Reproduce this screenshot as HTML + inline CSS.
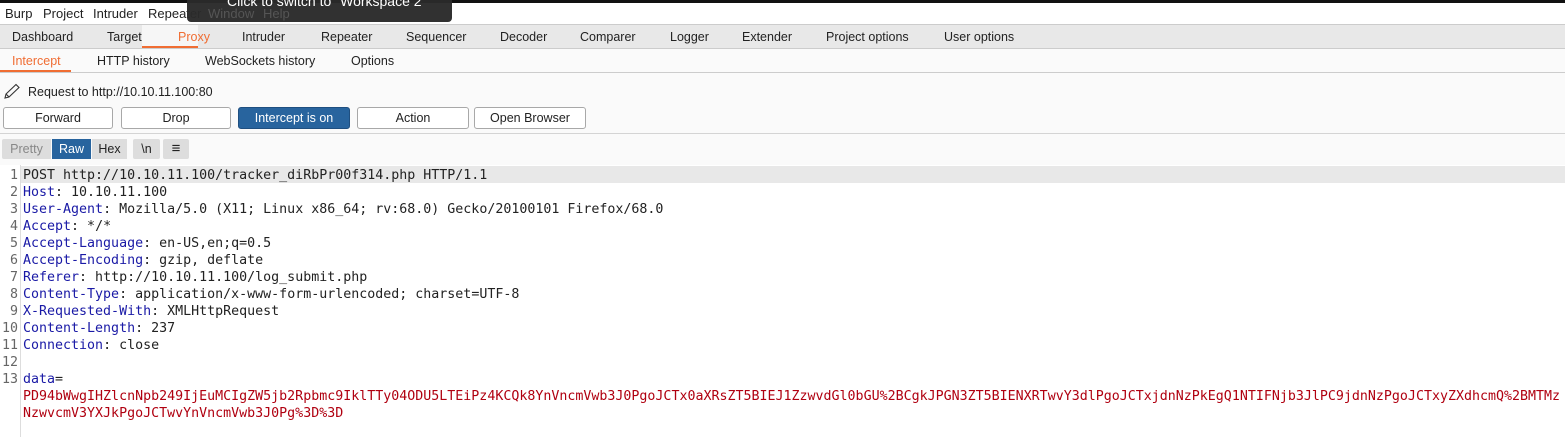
<!DOCTYPE html>
<html><head><style>
*{margin:0;padding:0;box-sizing:border-box}
body{width:1565px;height:437px;background:#fafafa;position:relative;overflow:hidden;font-family:"Liberation Sans",sans-serif;font-size:12.5px;color:#222}
.a{position:absolute;white-space:nowrap}
.btn{position:absolute;top:107px;height:22px;border:1px solid #a8a8a8;border-radius:3px;background:#fff;text-align:center;line-height:20px;font-size:12.5px}
.ed{position:absolute;left:0;top:167px;font-family:"DejaVu Sans Mono","Liberation Mono",monospace;font-size:13.3px;line-height:17px}
.ln{position:absolute;left:0;width:18px;text-align:right;color:#666}
.tx{position:absolute;left:23px;white-space:pre}
.k{color:#1a1aa6}
.r{color:#b00010}
</style></head><body>
<div class="a" style="left:0;top:0;width:1565px;height:3px;background:#111"></div>
<div class="a" style="left:0;top:3px;width:1565px;height:21px;background:#fff"></div>
<div class="a" style="left:5px;top:6px;font-size:13px">Burp</div>
<div class="a" style="left:43px;top:6px;font-size:13px">Project</div>
<div class="a" style="left:93px;top:6px;font-size:13px">Intruder</div>
<div class="a" style="left:148px;top:6px;font-size:13px">Repeater</div>
<div class="a" style="left:187px;top:0;width:265px;height:22px;background:#2a2a2a;border-radius:0 0 4px 4px;opacity:.97"></div>
<div class="a" style="left:208px;top:6px;color:#555;font-size:13px">Window</div>
<div class="a" style="left:263px;top:6px;color:#555;font-size:13px">Help</div>
<div class="a" style="left:227px;top:-7px;color:#fff;font-size:14px">Click to switch to "Workspace 2"</div>
<div class="a" style="left:0;top:24px;width:1565px;height:25px;background:#e8e8e8;border-top:1px solid #ccc;border-bottom:1px solid #ccc"></div>
<div class="a" style="left:142px;top:25px;width:56px;height:23px;background:#f6f6f6;border-bottom:2px solid #f06d33"></div>
<div class="a" style="left:12px;top:30px">Dashboard</div>
<div class="a" style="left:107px;top:30px">Target</div>
<div class="a" style="left:178px;top:30px;color:#f06d33">Proxy</div>
<div class="a" style="left:242px;top:30px">Intruder</div>
<div class="a" style="left:321px;top:30px">Repeater</div>
<div class="a" style="left:406px;top:30px">Sequencer</div>
<div class="a" style="left:500px;top:30px">Decoder</div>
<div class="a" style="left:580px;top:30px">Comparer</div>
<div class="a" style="left:670px;top:30px">Logger</div>
<div class="a" style="left:742px;top:30px">Extender</div>
<div class="a" style="left:826px;top:30px">Project options</div>
<div class="a" style="left:944px;top:30px">User options</div>
<div class="a" style="left:0;top:72px;width:1565px;height:1px;background:#ccc"></div>
<div class="a" style="left:0;top:70px;width:71px;height:2px;background:#f06d33"></div>
<div class="a" style="left:12px;top:54px;color:#f06d33">Intercept</div>
<div class="a" style="left:97px;top:54px">HTTP history</div>
<div class="a" style="left:205px;top:54px">WebSockets history</div>
<div class="a" style="left:351px;top:54px">Options</div>
<svg class="a" style="left:3px;top:83px" width="18" height="17" viewBox="0 0 18 17"><path d="M2 15 L3 11 L13 1.5 L16 4.5 L6 14 Z M3 11 L6 14" fill="none" stroke="#333" stroke-width="1.1"/></svg>
<div class="a" style="left:28px;top:85px">Request to http://10.10.11.100:80</div>
<div class="btn" style="left:3px;width:110px">Forward</div>
<div class="btn" style="left:121px;width:110px">Drop</div>
<div class="btn" style="left:238px;width:112px;background:#28649e;border-color:#1f4f80;color:#fff">Intercept is on</div>
<div class="btn" style="left:357px;width:112px">Action</div>
<div class="btn" style="left:474px;width:112px">Open Browser</div>
<div class="a" style="left:0;top:133px;width:1565px;height:1px;background:#d4d4d4"></div>
<div class="a" style="left:2px;top:139px;width:49px;height:20px;background:#ddd;color:#888;text-align:center;line-height:20px;border-radius:2px 0 0 2px">Pretty</div>
<div class="a" style="left:52px;top:139px;width:39px;height:20px;background:#28649e;color:#fff;text-align:center;line-height:20px">Raw</div>
<div class="a" style="left:92px;top:139px;width:35px;height:20px;background:#ddd;text-align:center;line-height:20px">Hex</div>
<div class="a" style="left:133px;top:139px;width:27px;height:20px;background:#ddd;text-align:center;line-height:20px;border-radius:2px">\n</div>
<div class="a" style="left:163px;top:139px;width:26px;height:20px;background:#ddd;text-align:center;line-height:19px;border-radius:2px;font-size:15px">&#8801;</div>
<div class="a" style="left:0;top:165px;width:1565px;height:272px;background:#fff"></div>
<div class="a" style="left:20px;top:165px;width:1px;height:272px;background:#ddd"></div>
<div class="a" style="left:21px;top:166px;width:1544px;height:17px;background:#e8e8e8"></div>
<div class="ed">
<div class="ln" style="top:0">1</div><div class="tx" style="top:0">POST http://10.10.11.100/tracker_diRbPr00f314.php HTTP/1.1</div>
<div class="ln" style="top:17px">2</div><div class="tx" style="top:17px"><span class="k">Host</span>: 10.10.11.100</div>
<div class="ln" style="top:34px">3</div><div class="tx" style="top:34px"><span class="k">User-Agent</span>: Mozilla/5.0 (X11; Linux x86_64; rv:68.0) Gecko/20100101 Firefox/68.0</div>
<div class="ln" style="top:51px">4</div><div class="tx" style="top:51px"><span class="k">Accept</span>: */*</div>
<div class="ln" style="top:68px">5</div><div class="tx" style="top:68px"><span class="k">Accept-Language</span>: en-US,en;q=0.5</div>
<div class="ln" style="top:85px">6</div><div class="tx" style="top:85px"><span class="k">Accept-Encoding</span>: gzip, deflate</div>
<div class="ln" style="top:102px">7</div><div class="tx" style="top:102px"><span class="k">Referer</span>: http://10.10.11.100/log_submit.php</div>
<div class="ln" style="top:119px">8</div><div class="tx" style="top:119px"><span class="k">Content-Type</span>: application/x-www-form-urlencoded; charset=UTF-8</div>
<div class="ln" style="top:136px">9</div><div class="tx" style="top:136px"><span class="k">X-Requested-With</span>: XMLHttpRequest</div>
<div class="ln" style="top:153px">10</div><div class="tx" style="top:153px"><span class="k">Content-Length</span>: 237</div>
<div class="ln" style="top:170px">11</div><div class="tx" style="top:170px"><span class="k">Connection</span>: close</div>
<div class="ln" style="top:187px">12</div>
<div class="ln" style="top:204px">13</div><div class="tx" style="top:204px"><span class="k">data</span>=</div>
<div class="tx r" style="top:221px">PD94bWwgIHZlcnNpb249IjEuMCIgZW5jb2Rpbmc9IklTTy04ODU5LTEiPz4KCQk8YnVncmVwb3J0PgoJCTx0aXRsZT5BIEJ1ZzwvdGl0bGU%2BCgkJPGN3ZT5BIENXRTwvY3dlPgoJCTxjdnNzPkEgQ1NTIFNjb3JlPC9jdnNzPgoJCTxyZXdhcmQ%2BMTMz</div>
<div class="tx r" style="top:238px">NzwvcmV3YXJkPgoJCTwvYnVncmVwb3J0Pg%3D%3D</div>
</div>
</body></html>
